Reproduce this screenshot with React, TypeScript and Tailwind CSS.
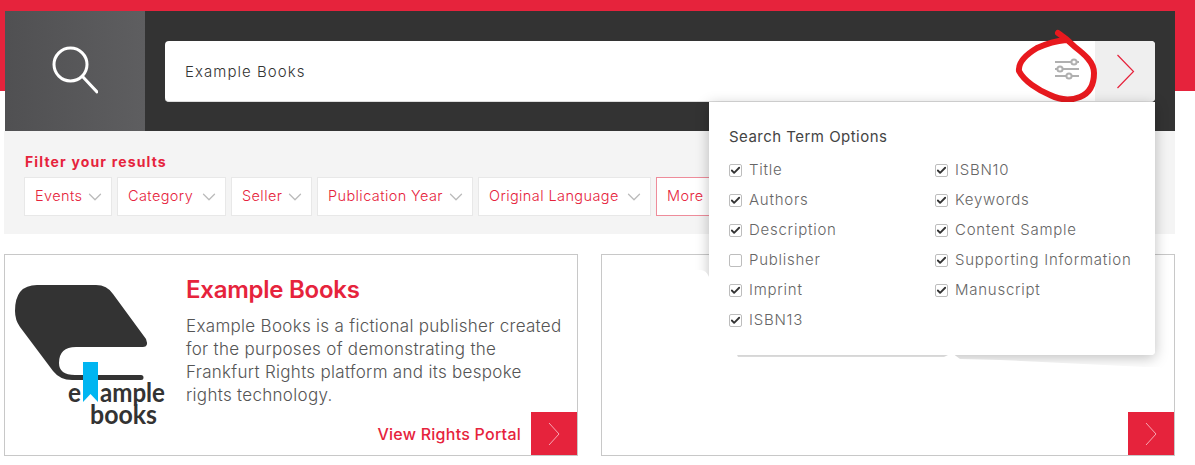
import { Check, ChevronDown } from "lucide-react";

const filters = [
  { label: "Events", width: "w-[88px]" },
  { label: "Category", width: "w-[109px]" },
  { label: "Seller", width: "w-[81px]" },
  { label: "Publication Year", width: "w-[156px]" },
  { label: "Original Language", width: "w-[173px]" },
];

const leftOptions = [
  { label: "Title", on: true },
  { label: "Authors", on: true },
  { label: "Description", on: true },
  { label: "Publisher", on: false },
  { label: "Imprint", on: true },
  { label: "ISBN13", on: true },
];

const rightOptions = ["ISBN10", "Keywords", "Content Sample", "Supporting Information", "Manuscript"];

function Option({ label, on }: { label: string; on: boolean }) {
  return (
    <label className="flex h-[30px] items-center">
      <span className="flex h-[13px] w-[13px] items-center justify-center rounded-[2px] border border-[#bdbdbd] bg-white">
        {on && <Check size={11} strokeWidth={4} className="text-[#333]" />}
      </span>
      <span className="ml-[7px] text-[15px] font-light tracking-[0.75px] text-[#666]">{label}</span>
    </label>
  );
}

function ExampleLogo() {
  return (
    <svg viewBox="10 280 160 150" className="mt-[25px] h-[150px] w-[160px] shrink-0">
      <path
        d="M37 285H96Q107 285 113 294L146 339Q149 347 143 347H76Q59 347 59 363Q59 375 75 375H141A2.5 2.5 0 0 1 141 380H72Q60 380 53 371L20 327Q15 320 15 311Q15 285 37 285Z"
        fill="#333"
      />
      <text x="68" y="402" fontFamily="Lato" fontWeight="700" fontSize="26" fill="#333" textLength="13" lengthAdjust="spacingAndGlyphs">
        e
      </text>
      <text x="100" y="402" fontFamily="Lato" fontWeight="700" fontSize="26" fill="#333" textLength="65" lengthAdjust="spacingAndGlyphs">
        ample
      </text>
      <text x="90" y="424" fontFamily="Lato" fontWeight="700" fontSize="26" fill="#333" textLength="67" lengthAdjust="spacingAndGlyphs">
        books
      </text>
      <path d="M83 362H98V402L90.5 394L83 402Z" fill="#00b5f1" />
    </svg>
  );
}

function CornerArrow() {
  return (
    <span className="absolute right-0 bottom-0 flex h-[43px] w-[46px] items-center justify-center bg-[#e6233c]">
      <svg viewBox="0 0 12 24" className="h-[24px] w-[12px]" fill="none" stroke="#f7a8b4" strokeWidth="1">
        <path d="M1 1L11 12L1 23" />
      </svg>
    </span>
  );
}

export default function App() {
  return (
    <div className="h-[465px] w-[1195px] overflow-hidden bg-[linear-gradient(#e6233c_91px,#ffffff_91px)] pt-[11px] pr-5 pl-[5px] font-['Inter',sans-serif]">
      {/* Search bar */}
      <div className="relative z-10 flex h-[120px] bg-[#333]">
        <div className="flex w-[140px] items-center justify-center bg-[linear-gradient(90deg,#505052,#5e5e60)]">
          <svg viewBox="0 0 46 50" className="h-[50px] w-[46px]" fill="none" stroke="white" strokeWidth="3" strokeLinecap="round">
            <circle cx="18.5" cy="18.5" r="16.5" />
            <path d="M31 31L45 46" />
          </svg>
        </div>
        <div className="ml-5 mt-[30px] flex h-[61px] w-[990px] overflow-hidden rounded-[4px] border-b border-[#ddd] bg-white">
          <div className="flex flex-1 items-center pt-[2px] pl-5 text-[15px] font-light tracking-[1.05px] text-[#333]">Example Books</div>
          <div className="flex w-[60px] items-center justify-center bg-[#efefef]">
            <svg viewBox="0 0 19 35" className="h-[35px] w-[19px]" fill="none" stroke="#e6233c" strokeWidth="1.2">
              <path d="M1.5 1L17.5 17.5L1.5 34" />
            </svg>
          </div>
        </div>

        {/* Settings icon and the hand-drawn circle on top of it */}
        <svg viewBox="1010 25 95 85" className="absolute top-[14px] left-[1005px] h-[85px] w-[95px]" fill="none">
          <g stroke="#b0b0b0" strokeWidth="2">
            <path d="M1055 62H1079M1055 69H1079M1055 76H1079" />
            <circle cx="1074" cy="62" r="2.6" fill="white" />
            <circle cx="1060" cy="69" r="2.6" fill="white" />
            <circle cx="1069" cy="76" r="2.6" fill="white" />
          </g>
          <path
            d="M1058 33C1064 37 1070 42 1075 47C1084 54 1094 62 1094 73C1094 84 1090 93 1080 97C1070 101 1060 100 1050 95C1038 90 1024 81 1019 71C1018 62 1027 54 1037 48C1046 44 1056 41 1066 40"
            stroke="#e8191e"
            strokeWidth="6"
            strokeLinecap="round"
          />
        </svg>

        {/* Search term options: shadow, the white logo that hides part of it, then the panel */}
        <div className="absolute top-[91px] left-[704px] h-[253px] w-[446px] rounded-b-[4px] shadow-[0_3px_14px_rgba(0,0,0,0.25)]" />
        <svg viewBox="640 260 530 150" className="absolute top-[249px] left-[635px] h-[150px] w-[530px]">
          <path
            d="M640 270H700Q709 270 711 285L730 340L738 357H944L952 353L960 359L1000 360L1145 367H1160V410H640Z"
            fill="white"
          />
        </svg>
        <div className="absolute top-[91px] left-[704px] h-[253px] w-[446px] rounded-b-[4px] bg-white px-5 pt-[24px]">
          <div className="text-[15px] tracking-[0.47px] text-[#444]">Search Term Options</div>
          <div className="mt-[7px] flex">
            <div className="w-[206px]">
              {leftOptions.map((o) => (
                <Option key={o.label} label={o.label} on={o.on} />
              ))}
            </div>
            <div>
              {rightOptions.map((o) => (
                <Option key={o} label={o} on />
              ))}
            </div>
          </div>
        </div>
      </div>

      {/* Filters */}
      <div className="-ml-px h-[103px] w-[1171px] bg-[#f4f4f4] pt-[22px] pr-5 pl-[21px]">
        <div className="text-[14px] leading-[18px] font-bold tracking-[1.15px] text-[#e6233c]">Filter your results</div>
        <div className="-ml-px mt-[6px] flex gap-[5px]">
          {filters.map((f) => (
            <div
              key={f.label}
              className={`flex h-[39px] items-center justify-between border border-[#e8e8e8] bg-white pr-[5px] pl-[10px] text-[14.5px] font-light tracking-[0.4px] text-[#e6233c] ${f.width}`}
            >
              <span className="pb-[2px]">{f.label}</span>
              <ChevronDown size={22} strokeWidth={1.4} className="shrink-0 text-[#bbb]" />
            </div>
          ))}
          <div className="flex h-[39px] w-[100px] items-center border border-[#ee8c9a] bg-white pb-[2px] pl-[10px] text-[14.5px] font-light tracking-[0.4px] text-[#e6233c]">
            More
          </div>
        </div>
      </div>

      {/* Publisher cards */}
      <div className="-ml-px mt-5 flex w-[1171px] gap-[23px]">
        <div className="relative flex h-[202px] w-[574px] border border-[#c8c8c8] bg-white pl-[5px]">
          <ExampleLogo />
          <div className="mt-[15px] ml-4">
            <div className="text-[24px] leading-[40px] font-semibold tracking-[-0.25px] text-[#e6233c]">Example Books</div>
            <p className="mt-[5px] w-[380px] text-[17px] leading-[23px] font-light tracking-[0.3px] text-[#555]">
              Example Books is a fictional publisher created for the purposes of demonstrating the Frankfurt Rights platform and its bespoke rights technology.
            </p>
          </div>
          <span className="absolute right-[56px] bottom-[9px] text-[16px] font-medium tracking-[0.25px] text-[#e6233c]">View Rights Portal</span>
          <CornerArrow />
        </div>
        <div className="relative h-[202px] w-[574px] border border-[#c8c8c8] bg-white">
          <CornerArrow />
        </div>
      </div>
    </div>
  );
}
